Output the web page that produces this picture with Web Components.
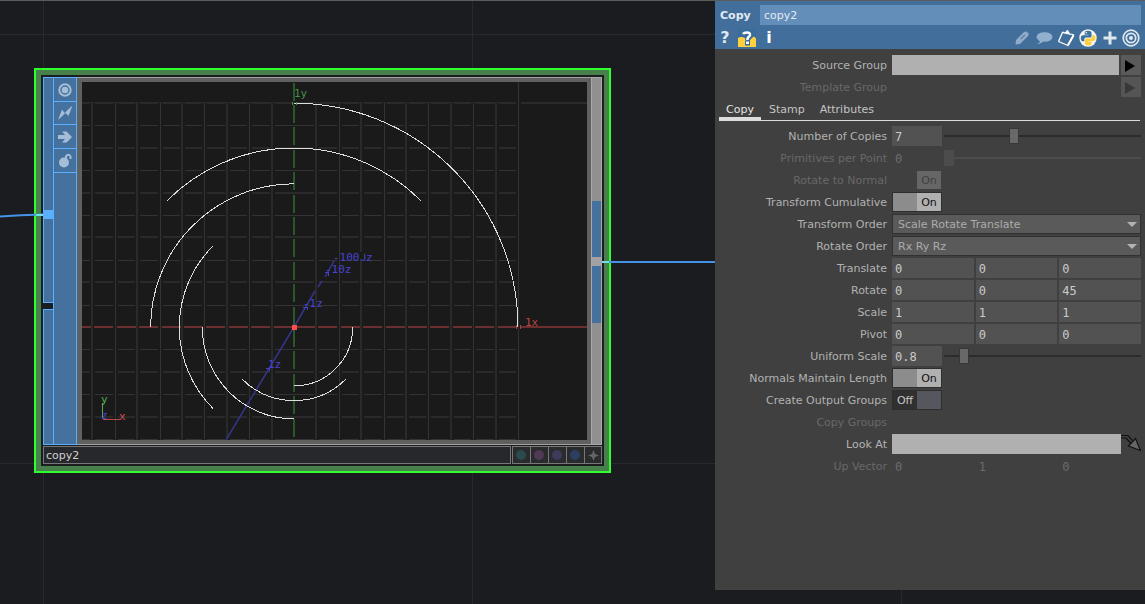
<!DOCTYPE html>
<html lang="en">
<head>
<meta charset="utf-8">
<title>Copy parameters</title>
<style>
html, body { height: 100%; }
body { margin: 0; background: #1b1c20; font: 11px/20px "DejaVu Sans", sans-serif; color: #b2b2b2; }
</style>
</head>
<body>
<network-editor>
  <op-node name="copy2"></op-node>
  <param-dialog slot="panel" type="Copy" name="copy2">
    <param-row kind="source" label="Source Group" slot="top"></param-row>
    <param-row kind="source" label="Template Group" disabled slot="top"></param-row>
    <param-row kind="slider" label="Number of Copies" value="7" max="20"></param-row>
    <param-row kind="slider" label="Primitives per Point" value="0" max="10" disabled></param-row>
    <param-row kind="toggle" label="Rotate to Normal" value="On" disabled></param-row>
    <param-row kind="toggle" label="Transform Cumulative" value="On"></param-row>
    <param-row kind="menu" label="Transform Order" value="Scale Rotate Translate"></param-row>
    <param-row kind="menu" label="Rotate Order" value="Rx Ry Rz"></param-row>
    <param-row kind="vector" label="Translate" value="0 0 0"></param-row>
    <param-row kind="vector" label="Rotate" value="0 0 45"></param-row>
    <param-row kind="vector" label="Scale" value="1 1 1"></param-row>
    <param-row kind="vector" label="Pivot" value="0 0 0"></param-row>
    <param-row kind="slider" label="Uniform Scale" value="0.8" max="10"></param-row>
    <param-row kind="toggle" label="Normals Maintain Length" value="On"></param-row>
    <param-row kind="toggle" label="Create Output Groups" value="Off"></param-row>
    <param-row kind="empty" label="Copy Groups" disabled></param-row>
    <param-row kind="object" label="Look At"></param-row>
    <param-row kind="vector" label="Up Vector" value="0 1 0" disabled></param-row>
  </param-dialog>
</network-editor>

<script>
class BaseElement extends HTMLElement {
  connectedCallback() {
    if (this.shadowRoot) return;
    this.attachShadow({ mode: "open" }).innerHTML = `<style>
      *, *::before { box-sizing: border-box; }
      button, input, select { font: inherit; color: inherit; margin: 0; padding: 0; border: 0; border-radius: 0; background: none; outline: 0; }
      svg { display: block; }
    </style>` + this.render();
  }
}

/* Canvas with its background rules and the wires that run to the node */
customElements.define("network-editor", class extends BaseElement {
  render() {
    return `<style>
      :host { display: flex; min-height: 100%; border-top: 1px solid #5c5c5c; box-sizing: border-box; position: relative; align-items: flex-start; overflow: hidden;
        background:
          linear-gradient(90deg, transparent 43px, #28292c 43px, #28292c 44px, transparent 44px) 0 0 / 429px 429px,
          linear-gradient(transparent 33px, #28292c 33px, #28292c 34px, transparent 34px) 0 0 / 429px 429px, #1b1c20; }
      .canvas { flex: 1; position: relative; align-self: stretch; min-width: 0; }
      ::slotted(op-node) { position: absolute; left: 34px; top: 67px; }
      .wires { position: absolute; left: 0; top: 0; width: 100%; height: 100%; }
    </style>
    <div class="canvas"><slot></slot>
      <svg class="wires" fill="none" stroke="#4593e8" stroke-width="2" aria-hidden="true">
        <path d="M0 215.500Q20 214 43 213.500"/><path d="M602 261H720"/>
        <path d="M36 214H43M602 261H609" stroke="#6fe0e6"/>
      </svg>
    </div><slot name="panel"></slot>`;
  }
});

customElements.define("op-node", class extends BaseElement {
  render() {
    return `<style>
      :host { display: block; border: 2px solid #2fff2f; background: #48804c; padding: 5px; }
      .inner { background: #1c1d1f; padding: 2px; }
      .body { display: flex; height: 368px; }
      .inputs { width: 11px; border: 1px solid #5ab0ff; border-right: 0; background: #44719d; display: flex; flex-direction: column; }
      .inputs i { height: 9px; background: #5ab0ff; margin: 132px 0 83px -1px; }
      .inputs b { height: 8px; background: #1b1c20; margin-left: -1px; border: solid #5ab0ff; border-width: 1px 0; }
      .flags { width: 24px; margin-left: -1px; border: 1px solid #5ab0ff; background: #44719d; }
      .flags button { display: flex; align-items: center; justify-content: center; width: 22px; height: 24px; border-bottom: 1px solid #5ab0ff; }
      .flags button:nth-child(2) { height: 23px; }
      .frame { border: solid #a2a2a2; border-width: 1px 0; background: #606060; padding: 4px 4px 4px 5px; }
      .display { width: 11px; border: 1px solid #a8a8ae; background: #909090; display: flex; flex-direction: column; padding-top: 123px; }
      .display i { height: 57px; background: #44719d; flex: none; }
      .display b { height: 9px; background: #a2a2a5; flex: none; }
      .display i:first-child { height: 56px; }
      .bar { display: flex; gap: 1px; margin-top: 1px; }
      input { flex: 1; min-width: 0; height: 18px; border: 1px solid #77777a; background: #26282b; color: #d0d0d0; padding: 2px 3px 0 2px; }
      .tags { display: flex; border: 1px solid #77777a; background: #292b2d; }
      .tags button { width: 18px; height: 16px; border-right: 1px solid #77777a; display: flex; align-items: center; padding-left: 3px; }
      .tags button:last-child { width: 16px; border: 0; }
      .tags i { width: 10px; height: 10px; border-radius: 5px; }
    </style>
    <div class="inner"><div class="body">
      <div class="inputs"><i></i><b></b></div>
      <div class="flags">
        <button aria-label="View"><svg width="14" height="14" viewBox="0 0 14 14" fill="none" stroke="#a5bdd6" stroke-width="2"><circle cx="7" cy="7" r="5.700"/><circle cx="7" cy="7" r="3.300" fill="#a5bdd6" stroke="none"/></svg></button>
        <button aria-label="Bypass"><svg width="15" height="16" viewBox="0 0 15 16" fill="#a5bdd6"><path d="M0 15L4 4.500 6.500 8 14.500 0.500 10.500 11 7.500 8Z"/></svg></button>
        <button aria-label="Lock"><svg width="14" height="14" viewBox="0 0 14 14" fill="#a5bdd6"><path d="M0 5H7L4 1.500H8.500L14 7 8.500 12.500H4L7 9H0Z"/></svg></button>
        <button aria-label="Unlock"><svg width="14" height="15" viewBox="0 0 14 15"><circle cx="6" cy="9.500" r="5" fill="#a5bdd6"/><path d="M8 6V3.500A2.300 2.300 0 0 1 12.500 3.500V6" fill="none" stroke="#a5bdd6" stroke-width="2"/></svg></button>
      </div>
      <div class="frame"><op-viewer></op-viewer></div>
      <div class="display"><i></i><b></b><i></i></div>
    </div>
    <div class="bar"><input aria-label="Node name" value="${this.getAttribute("name")}">
      <div class="tags">
        <button aria-label="Teal tag"><i style="background:#2a4b4d"></i></button>
        <button aria-label="Purple tag"><i style="background:#4f3957"></i></button>
        <button aria-label="Violet tag"><i style="background:#3f395c"></i></button>
        <button aria-label="Blue tag"><i style="background:#2d3f60"></i></button>
        <button aria-label="Add"><svg width="11" height="11" viewBox="0 0 11 11" fill="#666"><path d="M5.500 0L7 4 11 5.500 7 7 5.500 11 4 7 0 5.500 4 4Z"/></svg></button>
      </div></div>
    </div>`;
  }
});

/* Geometry view: grid in tenths of a unit and seven quarter arcs, each 45 degrees on and 0.8 the size */
customElements.define("op-viewer", class extends BaseElement {
  render() {
    const cx = 294, cy = 327, u = 224, s = u / 10;
    let thin = "", thick = "", gaps = "", red = "", green = "", arcs = "";
    const ys = [], xs = [];
    for (let k = -5; k <= 11; k++) ys.push(Math.round(cy - k * s));
    for (let k = -10; k <= 14; k++) xs.push(Math.round(cx + k * s));
    for (let k = -5; k <= 10; k++) {
      const y = Math.round(cy - k * s), end = k === 10 ? 587 : 518;
      if (!k) continue;
      if (k % 2) thin += `M82 ${y + 0.5}H${end}`; else thick += `M82 ${y}H${end}`;
    }
    let vThin = "", vThick = "";
    for (let k = -9; k <= 10; k++) {
      const x = Math.round(cx + k * s), top = k === 10 ? 82 : 103;
      if (!k) continue;
      gaps += `M${x + 0.5} ${top}V440`;
      if (k % 2) vThick += `M${x} ${top}V440`; else vThin += `M${x + 0.5} ${top}V440`;
    }
    for (const y of ys) green += `M294 ${y + 2}V${Math.min(440, y + 20)}`;
    for (const x of xs) if (x < 519) red += `M${Math.max(82, x + 2)} 327H${Math.max(82, x + 21)}`;
    red += "M520 327H587";
    for (let n = 0; n < 7; n++) {
      const r = u * Math.pow(0.8, n), a = n * Math.PI / 4, b = a + Math.PI / 2;
      const p = t => `${(cx + r * Math.cos(t)).toFixed(2)} ${(cy + 0.2 - r * Math.sin(t)).toFixed(2)}`;
      arcs += `M${p(a)}A${r} ${r} 0 0 0 ${p(b)}`;
    }
    return `<style>
      :host { display: block; background: #1a1a1a; }
      text { font: 11px "DejaVu Sans Mono", monospace; }
    </style>
    <svg width="505" height="358" viewBox="82 82 505 358" fill="none">
      <g shape-rendering="crispEdges">
        <path d="${thin}" stroke="#333"/>
        <path d="${thick}" stroke="#2a2a2a" stroke-width="2"/>
        <path d="${gaps}" stroke="#1a1a1a" stroke-width="5"/>
        <path d="${vThin}" stroke="#333"/>
        <path d="${vThick}" stroke="#2a2a2a" stroke-width="2"/>
        <path d="${red}" stroke="#6b2f2f" stroke-width="2"/>
        <path d="${green}" stroke="#2c562b" stroke-width="2"/>
      </g>
      <path d="M226 440L294 327L315 291M318 287L322 281M325 277L334 261" stroke="#36348c" stroke-width="1.500"/>
      <g shape-rendering="crispEdges">
        <path d="${arcs}" stroke="#dedede"/>
        <path d="M266 368H269V371M303 307H307V310M325 272H328V276" stroke="#4542c6"/>
        <path d="M516 325V329M520 325V329" stroke="#a74444"/>
        <path d="M292 102V105M296 102V105" stroke="#459145"/>
        <path d="M102.500 403V418" stroke="#55ad55"/><path d="M103 419.500H120" stroke="#b64b4b"/>
        <rect x="292" y="325" width="5" height="5" fill="#ff4d4d"/>
      </g>
      <text x="294" y="97" fill="#459145">1y</text>
      <text x="525" y="326" fill="#b84747">1x</text>
      <g fill="#4744d0">
        <text x="268" y="368">1z</text><text x="303" y="307">-1z</text>
        <text x="325" y="273">-10z</text><text x="333" y="261">-1000z</text>
        <text x="101" y="419">z</text>
      </g>
      <path d="M359 252H364V259H359Z" fill="#1a1a1a"/>
      <text x="101" y="403" fill="#55ad55">y</text><text x="119" y="420" fill="#d45050">x</text>
    </svg>`;
  }
});

customElements.define("param-dialog", class extends BaseElement {
  render() {
    return `<style>
      :host { display: block; flex: none; width: 430px; box-sizing: border-box; background: #404040; padding-bottom: 114px; position: relative; }
      header { background: #416e9a; height: 48px; padding: 4px 4px 0 5px; }
      .name { display: grid; grid-template-columns: 40px 1fr; height: 20px; line-height: 22px; }
      .name b { color: #e2e9f0; }
      .name input { height: 20px; background: #628eb9; color: #e2eaf2; padding: 2px 4px 0; }
      .tools { display: flex; align-items: center; height: 24px; padding-top: 2px; }
      .tools button { display: grid; place-items: center; height: 20px; flex: none; color: #dfe8f0; font: bold 16px/20px "DejaVu Sans", sans-serif; }
      .tools .gap { flex: 1; }
      .top { display: grid; gap: 2px; padding-top: 6px; }
      nav { display: flex; margin: 1px 5px 0 4px; box-shadow: inset 0 -1px #ddd; }
      nav button { height: 23px; padding: 2px 7px 0; color: #c4c4c4; border-bottom: 4px solid transparent; }
      nav button[aria-selected=true] { color: #e4e4e4; border-color: #ddd; }
      nav button:nth-child(n+2) { margin-left: 1px; }
      .rows { display: grid; gap: 2px; padding-top: 5px; }
    </style>
    <header>
      <div class="name"><b>${this.getAttribute("type")}</b><input aria-label="Operator name" value="${this.getAttribute("name")}"></div>
      <div class="tools">
        <button style="width:10px" aria-label="Help">?</button>
        <button style="width:20px;margin-left:7px" aria-label="Python help"><svg width="18" height="18" viewBox="0 0 18 18"><path d="M0 0H18V18H0Z" fill="#386d9f"/><path d="M0 9Q3 7 7 9L8 14H12V11L15 8Q17 7 18 10V18H0Z" fill="#ffd13c"/><path d="M5 5Q6 2.500 9 2.500 12.800 2.500 12.800 5.500 12.800 7 10.500 8.500 9.500 9.200 9.500 11" fill="none" stroke="#386d9f" stroke-width="4.500"/><path d="M5 5Q6 3.500 9 3.500 12.300 3.500 12 6 11.800 7 10.300 8.200 9.400 9 9.400 11" fill="none" stroke="#fff" stroke-width="2.500"/><path d="M7 12H12V16.500H7Z" fill="#386d9f"/><path d="M8 12.500H11V15H8Z" fill="#fff"/></svg></button>
        <button style="width:14px;margin-left:5px;color:#fff" aria-label="Info">i</button>
        <span class="gap"></span>
        <button style="width:22px" aria-label="Edit"><svg width="14" height="14" viewBox="0 0 14 14" fill="#8fabc8"><path d="M0.500 13.500L1 9 9 1Q10 0.300 11.500 0.500L13.500 2.500V4.500L5 13Z"/><path d="M5.500 7.500L9.500 3.500 10.300 4.300 6.300 8.300Z" fill="#54799f"/></svg></button>
        <button style="width:22px" aria-label="Comment"><svg width="17" height="13" viewBox="0 0 17 13" fill="#91b0ce"><ellipse cx="8.500" cy="5" rx="8" ry="4.800"/><path d="M2 7L4 10Q3 11 1 12 6 12 8 8Z"/></svg></button>
        <button style="width:22px" aria-label="Clipboard"><svg width="18" height="18" viewBox="0 0 18 18" fill="none" stroke="#fff"><path d="M1.500 12.500L5.500 3.500H7M13.500 5L16.500 6 11 16.500 1.500 12.500" stroke-width="1.300"/><path d="M11 16L16.500 6.500" stroke-width="2"/><path d="M7 4L9 3 10.500 1 11.500 3 13.500 5.500Z" fill="#fff" stroke-width=".8"/></svg></button>
        <button style="width:22px" aria-label="Python"><svg width="18" height="18" viewBox="0 0 18 18"><circle cx="9" cy="9" r="8.700" fill="#f5f5f5"/><path d="M9 1.800Q5.700 1.800 5.700 4V5.700H9.500V6.300H4Q1.800 6.300 1.800 9.300T4 12.200H5.300V10.300Q5.300 8.600 7.200 8.600H11Q12.500 8.600 12.500 7V4Q12.500 1.800 9 1.800Z" fill="#3a719f"/><path d="M9.300 16.500Q12.600 16.500 12.600 14.300V12.600H8.800V12H14.300Q16.400 12 16.400 9T14.300 6H13.300V7.800Q13.300 9.500 11.400 9.500H7.400Q6 9.500 6 11V14.300Q6 16.500 9.300 16.500Z" fill="#ffcf3a"/><circle cx="7.300" cy="3.800" r=".8" fill="#fff"/></svg></button>
        <button style="width:22px" aria-label="Add parameter"><svg width="14" height="14" viewBox="0 0 14 14"><path d="M7 0.500V13.500M0.500 7H13.500" stroke="#dfe7ee" stroke-width="3"/></svg></button>
        <button style="width:20px" aria-label="View target"><svg width="18" height="18" viewBox="0 0 18 18" fill="none" stroke="#dfe7ee" stroke-width="1.700"><circle cx="9" cy="9" r="7.800"/><circle cx="9" cy="9" r="4.700"/><circle cx="9" cy="9" r="2" fill="#dfe7ee" stroke="none"/></svg></button>
      </div>
    </header>
    <div class="top"><slot name="top"></slot></div>
    <nav role="tablist"><button role="tab" aria-selected="true">Copy</button><button role="tab">Stamp</button><button role="tab">Attributes</button></nav>
    <div class="rows"><slot></slot></div>`;
  }
});

customElements.define("param-row", class extends BaseElement {
  control() {
    const v = this.getAttribute("value") || "", off = this.hasAttribute("disabled") ? "disabled" : "";
    const name = this.getAttribute("label");
    switch (this.getAttribute("kind")) {
      case "source": return `<input id="c" class="${off ? "blank" : "string"} grow" ${off}>
        <button class="pick" ${off} aria-label="Choose ${name}"><svg width="10" height="12" viewBox="0 0 10 12"><path d="M0 0L10 6 0 12Z" fill="currentColor"/></svg></button>`;
      case "object": return `<input id="c" class="string grow"><button class="jump" aria-label="Pick object"><svg width="20" height="18" viewBox="0 0 20 18" fill="#666" stroke="#111" stroke-width="1.200"><path d="M0 1.500H7L11.500 6.500M0 4H5L9.500 9" fill="none"/><path d="M7.500 12L14.500 4.500 19.500 16.500Z"/></svg></button>`;
      case "slider": { const max = this.getAttribute("max"); return `<input id="c" class="num" value="${v}" ${off}><input type="range" aria-label="${name} slider" min="0" max="${max}" step="0.1" value="${v}" ${off}>`; }
      case "toggle": return `<span class="toggle ${v}"><input id="c" type="checkbox" ${v === "On" ? "checked" : ""} ${off}><span>${v === "Off" ? v : ""}</span><span>${v === "On" ? v : ""}</span></span>`;
      case "menu": return `<span class="menu grow"><select id="c"><option>${v}</option></select><svg width="10" height="5" viewBox="0 0 10 5"><path d="M0 0H10L5 5Z" fill="#b2b2b2"/></svg></span>`;
      case "vector": return `<span class="vec grow">${v.split(" ").map((n, i) => `<input ${i ? `aria-label="${name} ${"xyz"[i]}"` : `id="c"`} class="num" value="${n}" ${off}>`).join("")}</span>`;
      default: return `<input id="c" class="blank grow" ${off}>`;
    }
  }
  render() {
    return `<style>
      :host { display: grid; grid-template-columns: 172px 1fr; column-gap: 5px; height: 20px; padding-right: 4px; color: #b2b2b2; }
      :host([disabled]) { color: #686868; }
      label { text-align: right; white-space: nowrap; line-height: 22px; height: 20px; }
      .field { display: flex; gap: 2px; min-width: 0; }
      .grow { flex: 1; min-width: 0; }
      input, select, button { height: 20px; }
      .string { background: #b0b0b0; color: #111; padding: 0 4px; }
      .pick { width: 20px; background: #5a5a5a; color: #000; padding: 2px 4px 0; }
      .pick:disabled { background: #555; color: #383838; }
      :host([kind=object]) .field { gap: 0; }
      .jump { width: 20px; display: flex; }
      .num { width: 50px; min-width: 0; background: #525252; padding: 2px 3px 0; color: #cacaca; font: 12px/18px "DejaVu Sans Mono", monospace; }
      .num:disabled { background: none; color: #6c6c6c; }
      .vec { display: grid; grid-template-columns: repeat(3, 1fr); gap: 2px; }
      .vec .num { width: 100%; }
      input[type=range] { flex: 1; min-width: 0; appearance: none; background: linear-gradient(#2c2c2c, #2c2c2c) 0 50% / 100% 2px no-repeat; }
      input[type=range]::-webkit-slider-thumb { appearance: none; width: 10px; height: 16px; background: #686868; border: 1px solid #363636; box-sizing: border-box; border-radius: 0; }
      input[type=range]:disabled { background-image: linear-gradient(#4c4c4c, #4c4c4c); }
      input[type=range]:disabled::-webkit-slider-thumb { background: #4c4c4c; border-color: #4c4c4c; }
      .toggle { position: relative; display: flex; width: 50px; height: 20px; border: 1px solid #2e2e2e; line-height: 20px; }
      .toggle span { width: 24px; height: 18px; text-align: center; color: #111; }
      .toggle input { position: absolute; inset: 0; width: 100%; height: 100%; opacity: 0; }
      .On span { background: #b0b0b0; }
      .On input + span { background: #8c8c8c; }
      .Off span { background: #56565e; }
      .Off input + span { background: #303030; color: #c8c8c8; }
      :host([disabled]) .toggle { border-color: transparent; }
      :host([disabled]) .On span { background: #666; color: #404040; }
      :host([disabled]) .On input + span { background: none; }
      .menu { display: grid; align-items: center; grid-template-columns: 1fr 10px 3px; background: #5a5a5a; border: 1px solid #313131; }
      select { appearance: none; grid-area: 1 / 1 / 2 / 4; height: 18px; width: 100%; padding-left: 5px; color: #acacac; }
      .menu svg { grid-area: 1 / 2; pointer-events: none; }
    </style>
    <label for="c">${this.getAttribute("label")}</label><div class="field">${this.control()}</div>`;
  }
});
</script>
</body>
</html>
